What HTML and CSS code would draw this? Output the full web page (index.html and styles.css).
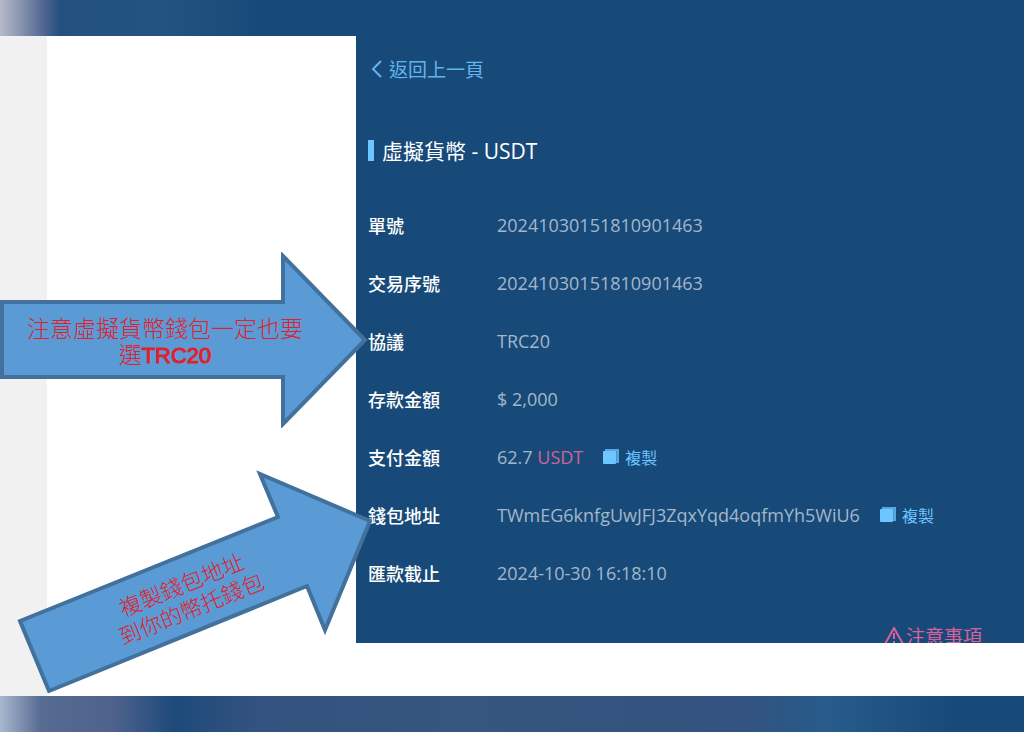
FILE: index.html
```html
<!DOCTYPE html>
<html lang="zh-Hant">
<head>
    <meta charset="UTF-8">
    <meta name="viewport" content="width=device-width, initial-scale=1.0">
    <title>虛擬貨幣 - USDT</title>
    <link rel="stylesheet" href="styles.css">
</head>
<body>

    <div class="band band-top"></div>

    <main class="stage">
        <div class="sidebar"></div>
        <section class="panel">
            <a class="back" href="#">
                <svg width="12" height="18" viewBox="0 0 12 18"><path d="M10 1 L2 9 L10 17"/></svg>
                返回上一頁
            </a>
            <h1>虛擬貨幣 - USDT</h1>
            <dl class="order">
                <dt>單號</dt>
                <dd>20241030151810901463</dd>
                <dt>交易序號</dt>
                <dd>20241030151810901463</dd>
                <dt>協議</dt>
                <dd>TRC20</dd>
                <dt>存款金額</dt>
                <dd>$ 2,000</dd>
                <dt>支付金額</dt>
                <dd>
                    <span>62.7 <span class="pink">USDT</span></span>
                    <button class="copy" type="button">
                        <svg width="16" height="16" viewBox="0 0 16 16"><path class="sheet-back" d="M3 3 V1 H15 V13 H13"/><rect x="0" y="2" width="13" height="13" rx="1"/></svg>
                        複製
                    </button>
                </dd>
                <dt>錢包地址</dt>
                <dd>
                    <span>TWmEG6knfgUwJFJ3ZqxYqd4oqfmYh5WiU6</span>
                    <button class="copy" type="button">
                        <svg width="16" height="16" viewBox="0 0 16 16"><path class="sheet-back" d="M3 3 V1 H15 V13 H13"/><rect x="0" y="2" width="13" height="13" rx="1"/></svg>
                        複製
                    </button>
                </dd>
                <dt>匯款截止</dt>
                <dd>2024-10-30 16:18:10</dd>
            </dl>
            <p class="notice">
                <svg width="20" height="18" viewBox="0 0 20 18"><path d="M10 1 L19 17 H1 Z M10 6 V12 M10 14 V16"/></svg>
                注意事項
            </p>
        </section>

        <!-- arrows on top of the panel -->
        <div class="arrow arrow-protocol">
            <svg width="368" height="176" viewBox="0 0 368 176"><path d="M2 50 H283 V4 L365 88 L283 172 V125 H2 Z"/></svg>
            <p>注意虛擬貨幣錢包一定也要<br>選<span class="latin">TRC20</span></p>
        </div>
        <div class="arrow arrow-wallet">
            <svg width="356" height="224" viewBox="0 0 356 224"><path d="M4 151 L262 47 L244 4 L354 51 L309 160 L291 116 L33 221 Z"/></svg>
            <p>複製錢包地址<br>到你的幣托錢包</p>
        </div>
    </main>

    <div class="band band-bottom"></div>

</body>
</html>
```

FILE: styles.css
```css
*{
    box-sizing: border-box;
}
body{
    margin: 0;
    min-height: 100vh;
    display: flex;
    flex-direction: column;
    background-color: #fff;
    font-family: "Open Sans", "Noto Sans CJK TC", sans-serif;
}
.band{
    height: 36px;
}
.band-top{
    background: linear-gradient(90deg, #b4bac8 0, #8b97b0 20px, #596c96 40px, #24507f 60px, #235380 160px, #184a79 260px);
}
.band-bottom{
    background: linear-gradient(90deg, #a9b7cf 0, #566b91 4%, #4f628c 11%, #1d4a7b 17%, #33527f 25%, #36567f 45%, #33527f 72%, #275b8b 81%, #184a79 93%);
}
.stage{
    position: relative;
    flex: 1;
    display: grid;
    grid-template-columns: 47px 309px 1fr;
    align-items: start;
}
.sidebar{
    align-self: stretch;
    background-color: #f1f1f1;
}
.panel{
    grid-column: 3;
    height: 607px;
    padding: 19px 12px 0;
    overflow: hidden;
    background-color: #184a79;
    color: #fff;
}
.back{
    display: flex;
    align-items: center;
    gap: 6px;
    padding-left: 3px;
    height: 28px;
    font-size: 19px;
    color: #62b5ea;
    text-decoration: none;
}
svg{
    display: block;
    flex: none;
}
.back svg, .notice svg{
    fill: none;
    stroke: currentColor;
    stroke-width: 2;
}
h1{
    display: flex;
    align-items: center;
    gap: 8px;
    margin: 52px 0 31px;
    height: 30px;
    font-size: 21px;
    font-weight: 400;
}
h1::before{
    content: "";
    width: 6px;
    height: 21px;
    background-color: #6dc6ff;
}
.order{
    display: grid;
    grid-template-columns: 129px 1fr;
    grid-auto-rows: 58px;
    align-items: center;
    margin: 0;
    font-size: 18px;
}
dt{
    font-weight: 500;
}
dd{
    display: flex;
    align-items: center;
    gap: 20px;
    margin: 0;
    color: #a3b7ca;
    white-space: nowrap;
}
.pink{
    color: #cf6497;
}
.copy{
    display: flex;
    align-items: center;
    gap: 6px;
    padding: 0;
    border: 0;
    background: none;
    font-family: inherit;
    font-size: 16px;
    color: #6dc6ff;
    cursor: pointer;
}
.copy svg{
    fill: currentColor;
}
.copy .sheet-back{
    fill: #4a94c8;
    stroke: #58a8dd;
    stroke-width: 2;
}
.notice{
    display: flex;
    align-items: center;
    justify-content: flex-end;
    gap: 2px;
    margin: 20px 30px 0 0;
    height: 28px;
    font-size: 19px;
    color: #d9619b;
}
.arrow{
    position: absolute;
}
.arrow svg{
    fill: #5b9bd5;
    stroke: #41719c;
    stroke-width: 4;
}
.arrow p{
    position: absolute;
    margin: 0;
    font-family: "Liberation Sans", "Noto Sans CJK TC", sans-serif;
    font-size: 23px;
    font-weight: 300;
    line-height: 26px;
    text-align: center;
    white-space: nowrap;
    color: #e0202c;
}
.arrow .latin{
    font-size: 22px;
    -webkit-text-stroke: 1px;
}
.arrow-protocol{
    left: 0;
    top: 216px;
}
.arrow-protocol p{
    left: 27px;
    top: 64px;
}
.arrow-wallet{
    left: 16px;
    top: 434px;
}
.arrow-wallet p{
    left: 94px;
    top: 102px;
    font-size: 22px;
    transform: rotate(-22deg);
}
```
